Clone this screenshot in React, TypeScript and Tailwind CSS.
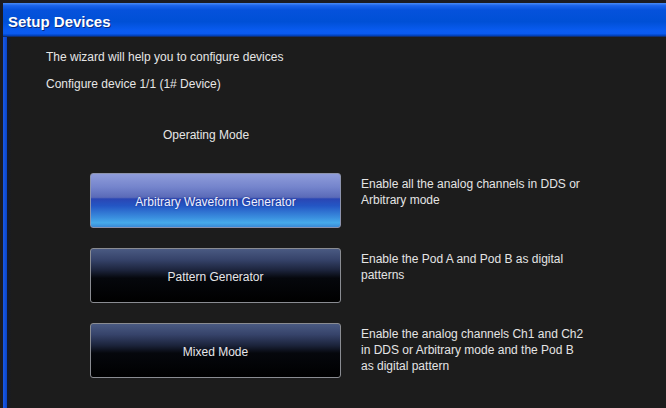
import React from 'react'

const modes = [
  {
    label: 'Arbitrary Waveform Generator',
    active: true,
    desc: ['Enable all the analog channels in DDS or', 'Arbitrary mode'],
  },
  {
    label: 'Pattern Generator',
    active: false,
    desc: ['Enable the Pod A and Pod B as digital', 'patterns'],
  },
  {
    label: 'Mixed Mode',
    active: false,
    desc: [
      'Enable the analog channels Ch1 and Ch2',
      'in DDS or Arbitrary mode and the Pod B',
      'as digital pattern',
    ],
  },
]

function ModeButton({ label, active }: { label: string; active: boolean }) {
  const look = active
    ? 'border-[#8c93ad] bg-[linear-gradient(to_bottom,#8f9cda_0%,#7484cc_25%,#5a6ab8_44%,#2a46b4_47%,#2456c4_60%,#3a8ede_82%,#46aaea_92%,#3a8ad6_100%)] text-[#eef0ff]'
    : 'border-[#8a8c92] bg-[linear-gradient(to_bottom,#4a5a82_0%,#36436a_20%,#1c243c_40%,#05070c_55%,#000000_100%)] text-[#e6e6ea]'
  return (
    <button
      className={`w-[251px] h-[55px] shrink-0 rounded-[3px] border pt-[3px] text-[12px] leading-[16px] ${look}`}
      style={{ textShadow: active ? '0 0 2px rgba(20,40,120,0.8)' : undefined }}
    >
      {label}
    </button>
  )
}

export default function App() {
  return (
    <div
      className="w-[666px] h-[408px] overflow-hidden bg-[#1c1c22] pt-[3px] pl-[3px]"
      style={{ fontFamily: '"Liberation Sans", Arial, sans-serif' }}
    >
      <div className="flex h-full flex-col">
        {/* title bar */}
        <div className="h-[34px] shrink-0 bg-[linear-gradient(to_bottom,#4a8cf6_0%,#1a62ea_8%,#0652dc_20%,#0050d6_55%,#0a5cf2_82%,#0a5af0_90%,#0040b8_96%,#1a2448_100%)] pl-[5px] pt-[7px]">
          <span
            className="text-[15px] font-bold leading-[18px] text-white"
            style={{ textShadow: '1px 1px 0 #0a2a80' }}
          >
            Setup Devices
          </span>
        </div>

        <div className="flex flex-1">
          <div className="w-[4px] shrink-0 bg-[linear-gradient(to_right,#1a5ae8,#0a44c8)]" />
          <div className="flex-1 bg-[linear-gradient(to_right,#121a30_0px,#1c1c1c_4px)] pl-[39px] pt-[12px] text-[12px] leading-[16px] text-[#e6e6e6]">
            <div>The wizard will help you to configure devices</div>
            <div className="mt-[11px]">Configure device 1/1 (1# Device)</div>
            <div className="ml-[117px] mt-[35px]">Operating Mode</div>

            <div className="mt-[30px] ml-[44px] flex flex-col gap-[20px]">
              {modes.map((m) => (
                <div key={m.label} className="flex items-start gap-[20px]">
                  <ModeButton label={m.label} active={m.active} />
                  <div className="pt-[3px] leading-[16px] text-[#e4e4e4]">
                    {m.desc.map((line) => (
                      <div key={line}>{line}</div>
                    ))}
                  </div>
                </div>
              ))}
            </div>
          </div>
        </div>
      </div>
    </div>
  )
}
